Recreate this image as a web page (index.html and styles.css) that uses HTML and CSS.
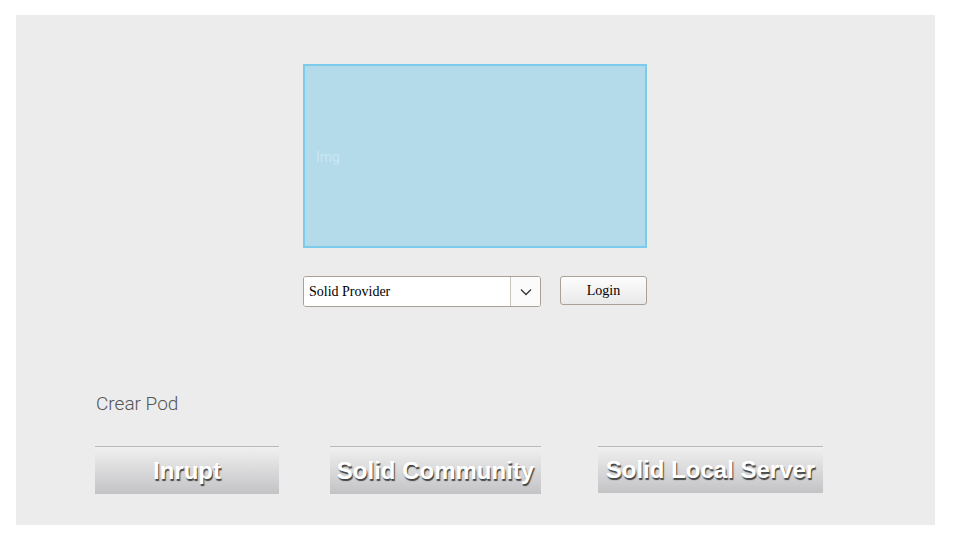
FILE: index.html
```html
<!DOCTYPE html>
<html lang="en">

<head>
  <meta charset="UTF-8">
  <meta name="viewport" content="width=device-width, initial-scale=1.0">
  <title>Solid Login</title>
  <link rel="stylesheet" href="styles.css">
</head>

<body>
  <main class="panel">
    <section class="login">
      <div class="img-box">Img</div>
      <form class="login-row">
        <div class="provider">
          <select>
            <option>Solid Provider</option>
          </select>
          <span class="arrow">
            <svg width="12" height="8" viewBox="0 0 12 8"><path d="M1 1.5 6 6.5 11 1.5" fill="none" stroke="#333" stroke-width="1.3"/></svg>
          </span>
        </div>
        <button type="submit">Login</button>
      </form>
    </section>
    <section class="create">
      <h2>Crear Pod</h2>
      <div class="providers">
        <button type="button" class="pod inrupt">Inrupt</button>
        <button type="button" class="pod community">Solid Community</button>
        <button type="button" class="pod local">Solid Local Server</button>
      </div>
    </section>
  </main>
</body>

</html>
```

FILE: styles.css
```css
* {
  box-sizing: border-box;
}

body {
  margin: 0;
  padding: 15px 19px 25px 16px;
  background: #fff;
  font-family: "Liberation Serif", serif;
}

.panel {
  height: 510px;
  background: #ececec;
  padding: 49px 0 0 0;
}

.login {
  display: flex;
  flex-direction: column;
  align-items: center;
  padding-right: 1px;
}

.img-box {
  width: 344px;
  height: 184px;
  background: #b4dbea;
  border: 2px solid #7dcbec;
  display: flex;
  align-items: center;
  padding-left: 11px;
  padding-top: 1px;
  color: #c8e7f3;
  font-family: Roboto, "Liberation Sans", sans-serif;
  font-size: 14px;
}

.login-row {
  display: flex;
  align-items: flex-start;
  gap: 19px;
  margin-top: 28px;
  width: 344px;
}

.provider {
  display: flex;
  width: 238px;
  height: 31px;
  border: 1px solid #a9a196;
  border-radius: 3px;
  background: #fff;
  overflow: hidden;
}

.provider select {
  flex: 1;
  appearance: none;
  -webkit-appearance: none;
  border: none;
  outline: none;
  background: #fff;
  font-family: "Liberation Serif", serif;
  font-size: 14px;
  color: #000;
  padding: 0 5px;
}

.provider .arrow {
  width: 30px;
  border-left: 1px solid #c9c4bc;
  display: flex;
  align-items: center;
  justify-content: center;
  background: #fbfbfb;
}

.login-row button {
  width: 87px;
  height: 29px;
  border: 1px solid #a9a196;
  border-radius: 3px;
  background: linear-gradient(#fdfdfd, #e9e9e9);
  font-family: "Liberation Serif", serif;
  font-size: 14px;
  color: #000;
  padding: 0;
}

.create {
  padding-left: 80px;
  margin-top: 86px;
}

.create h2 {
  margin: 0;
  font-family: Roboto, "Liberation Sans", sans-serif;
  font-weight: 300;
  font-size: 19px;
  line-height: 22px;
  color: #555;
}

.providers {
  display: flex;
  align-items: flex-start;
  margin-top: 31px;
  margin-left: -1px;
}

.pod {
  height: 48px;
  border: none;
  border-top: 1px solid #b9b9b9;
  background: linear-gradient(#f0f0f0, #c3c3c6);
  font-family: "Liberation Sans", Arial, sans-serif;
  font-weight: bold;
  font-size: 24px;
  color: #fff;
  text-shadow: 1px 2px 1px #444;
  padding: 0;
}

.inrupt {
  width: 184px;
}

.community {
  width: 211px;
  margin-left: 51px;
}

.local {
  width: 225px;
  height: 47px;
  margin-left: 57px;
}
```
